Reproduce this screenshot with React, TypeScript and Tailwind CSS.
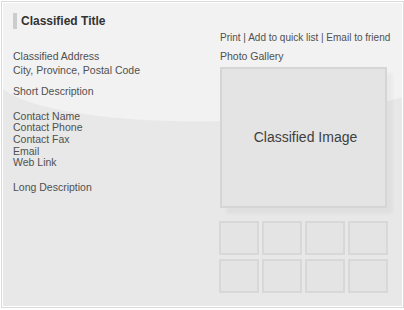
const left = "text-[10.5px] leading-[11.7px] text-[#505050]";

export default function App() {
  const thumbs = Array.from({ length: 8 });
  return (
    <div className="w-[404px] h-[310px] bg-white pt-px pl-px font-['Liberation_Sans',Arial,sans-serif]">
      <div className="w-[403px] h-[307px] border border-[#dadada] bg-white p-px">
        <div className="relative h-full w-full overflow-hidden bg-[#e8e8e8] px-[10px] pt-[10px]">
          {/* background swoosh */}
          <svg className="absolute inset-0" width="400" height="303" viewBox="0 0 400 303">
            <path d="M0,0 H400 V94 C280,130 50,125 0,86 Z" fill="#f2f2f2" />
          </svg>

          <div className="relative">
            <div className="flex items-center">
              <div className="w-[4px] h-[16px] bg-[#cccccc]" />
              <h1 className="ml-[4px] text-[12px] leading-[16px] font-bold text-[#333]">Classified Title</h1>
            </div>

            <div className="flex">
              <div className="w-[207px] pt-[22px]">
                <p className={left}>Classified Address</p>
                <p className={`${left} mt-[1.8px]`}>City, Province, Postal Code</p>
                <p className={`${left} mt-[10px]`}>Short Description</p>
                <div className="mt-[12.6px]">
                  <p className={left}>Contact Name</p>
                  <p className={left}>Contact Phone</p>
                  <p className={left}>Contact Fax</p>
                  <p className={left}>Email</p>
                  <p className={left}>Web Link</p>
                </div>
                <p className={`${left} mt-[12.6px]`}>Long Description</p>
              </div>

              <div className="pt-[2.5px]">
                <p className="text-[10px] leading-[12px] text-[#505050] whitespace-nowrap">
                  Print | Add to quick list | Email to friend
                </p>
                <p className={`${left} mt-[7px]`}>Photo Gallery</p>
                <div className="mt-[4.8px] w-[167px] h-[141px] border-2 border-[#d5d5d5] bg-[#e4e4e4] flex items-center justify-center pl-[4px] shadow-[6px_6px_3px_rgba(0,0,0,0.035)]">
                  <span className="text-[14px] text-[#3f3f3f]">Classified Image</span>
                </div>
                <div className="mt-[13px] -ml-px grid grid-cols-[repeat(4,40px)] gap-x-[3px] gap-y-[4px]">
                  {thumbs.map((_, i) => (
                    <div key={i} className="h-[34px] border-2 border-[#d8d8d8] bg-[#e4e4e4]" />
                  ))}
                </div>
              </div>
            </div>
          </div>
        </div>
      </div>
    </div>
  );
}
